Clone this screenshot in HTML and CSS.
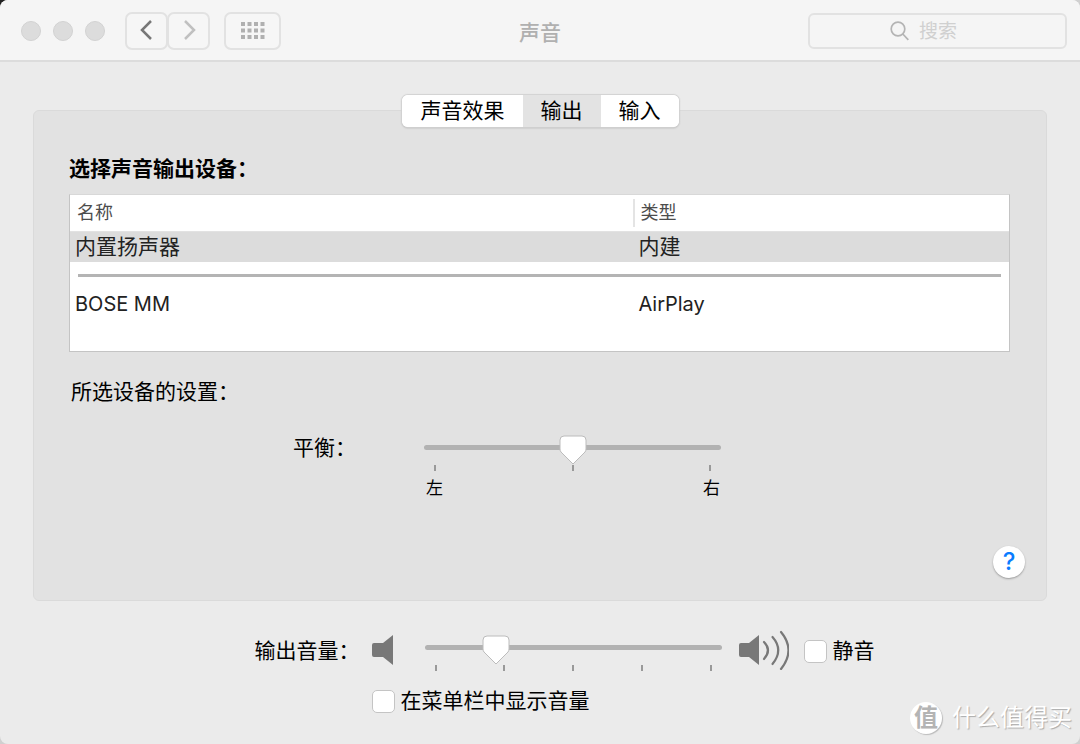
FILE: index.html
```html
<!DOCTYPE html>
<html lang="zh-CN">
<head>
<meta charset="utf-8">
<meta name="viewport" content="width=device-width, initial-scale=1">
<title>声音</title>
<link rel="stylesheet" href="styles.css">
</head>
<body>
<div class="window">
  <header class="toolbar">
    <div class="toolbar-left">
      <div class="lights"><span class="light"></span><span class="light"></span><span class="light"></span></div>
      <div class="nav">
        <button class="tool-button" type="button" aria-label="后退">
          <svg width="18" height="22" viewBox="0 0 18 22"><path d="M13 2 4 11 13 20" fill="none" stroke="#777" stroke-width="2.500"/></svg>
        </button>
        <button class="tool-button" type="button" aria-label="前进" disabled>
          <svg width="18" height="22" viewBox="0 0 18 22"><path d="M5 2 14 11 5 20" fill="none" stroke="#c0c0c0" stroke-width="2.500"/></svg>
        </button>
      </div>
      <button class="tool-button tool-button-wide" type="button" aria-label="显示全部">
        <svg width="24" height="18" viewBox="0 0 24 18" fill="#b0b0b0">
          <path d="M0 1h4v4H0zM6.500 1h4v4h-4zM13 1h4v4h-4zM19.500 1h4v4h-4zM0 7.500h4v4H0zM6.500 7.500h4v4h-4zM13 7.500h4v4h-4zM19.500 7.500h4v4h-4zM0 14h4v4H0zM6.500 14h4v4h-4zM13 14h4v4h-4zM19.500 14h4v4h-4z"/>
        </svg>
      </button>
    </div>
    <h1 class="title">声音</h1>
    <label class="search">
      <svg width="20" height="20" viewBox="0 0 20 20" fill="none" stroke="#b4b4b4" stroke-width="1.700"><circle cx="8" cy="8" r="6.800"/><path d="m12.800 13 5.500 5.800"/></svg>
      <input class="search-input" type="text" placeholder="搜索" aria-label="搜索">
    </label>
  </header>

  <main class="content">
    <div class="tabs" role="tablist">
      <button class="tab" type="button" role="tab">声音效果</button>
      <button class="tab tab-active" type="button" role="tab" aria-selected="true">输出</button>
      <button class="tab" type="button" role="tab">输入</button>
    </div>

    <section class="panel">
      <h2 class="heading">选择声音输出设备：</h2>
      <div class="device-list">
        <table class="devices">
          <thead>
            <tr><th class="col-name">名称</th><th class="col-type"><span class="type-label">类型</span></th></tr>
          </thead>
          <tbody>
            <tr class="selected"><td>内置扬声器</td><td>内建</td></tr>
            <tr><td class="divider" colspan="2"><hr class="rule"></td></tr>
            <tr class="latin"><td>BOSE MM</td><td>AirPlay</td></tr>
          </tbody>
        </table>
      </div>
      <p class="subheading">所选设备的设置：</p>
      <div class="controls balance">
        <label class="control-label" for="balance">平衡：</label>
        <div class="slider">
          <input class="range" id="balance" type="range" min="0" max="100" value="50">
          <div class="ticks"><i class="tick"></i><i class="tick"></i><i class="tick"></i></div>
          <div class="ends"><span>左</span><span>右</span></div>
        </div>
      </div>
      <div class="help-row"><button class="help" type="button" aria-label="帮助">?</button></div>
    </section>

    <div class="controls volume">
      <label class="control-label" for="volume">输出音量：</label>
      <svg class="speaker" width="22" height="32" viewBox="0 0 22 32"><path d="M2 9h9L21 1v30l-10-8H2q-2 0-2-2V11q0-2 2-2z" fill="#787878"/></svg>
      <div class="slider">
        <input class="range" id="volume" type="range" min="0" max="1000" value="215">
        <div class="ticks"><i class="tick"></i><i class="tick"></i><i class="tick"></i><i class="tick"></i><i class="tick"></i></div>
      </div>
      <svg class="speaker-loud" width="52" height="40" viewBox="0 0 52 40"><path d="M4 13h8l10-8v30l-10-8H4q-2 0-2-2V15q0-2 2-2z" fill="#787878"/><g fill="none" stroke="#787878" stroke-width="2.200" stroke-linecap="round"><path d="M27 12q8 8 0 17"/><path d="M35.500 7q11.500 13 0 27"/><path d="M44 2q15 18 0 37"/></g></svg>
      <label class="check"><input class="box" type="checkbox">静音</label>
      <label class="check check-menu"><input class="box" type="checkbox">在菜单栏中显示音量</label>
    </div>
  </main>

  <div class="watermark"><span class="mark">值</span><span>什么值得买</span></div>
</div>
</body>
</html>
```

FILE: styles.css
```css
* { box-sizing: border-box; }

html {
  background: radial-gradient(circle at 0 0, #222 0, #222 10px, #d0d0d0 11px);
}

body {
  margin: 0;
  color: #000;
  font: 21px/30px Roboto, "Noto Sans CJK SC", sans-serif;
}

button, input { font: inherit; color: inherit; }

.window {
  position: relative;
  min-height: 100vh;
  overflow: hidden;
  background: #ebebeb;
  border-radius: 8px;
}

.toolbar {
  display: grid;
  grid-template-columns: 1fr auto 1fr;
  align-items: center;
  height: 62px;
  padding: 2px 13px 0;
  background: #f5f5f5;
  border-bottom: 2px solid #dcdcdc;
}

.toolbar-left { display: flex; align-items: center; }
.lights { display: flex; gap: 12px; margin: 0 20px 0 8px; }
.light {
  width: 20px;
  height: 20px;
  background: #dcdcdc;
  border: 1px solid #d2d2d2;
  border-radius: 50%;
}
.nav { display: flex; margin-right: 14px; }

.tool-button {
  display: flex;
  align-items: center;
  justify-content: center;
  width: 43px;
  height: 38px;
  padding: 0 0 2px;
  background: #f6f6f6;
  border: 2px solid #e2e2e2;
  border-radius: 7px;
}
.tool-button + .tool-button { margin-left: -1px; }
.tool-button-wide { width: 57px; }

.title {
  margin: 4px 0 0;
  color: #b0b0b0;
  font-size: 21px;
  font-weight: 500;
}

.search {
  display: flex;
  align-items: center;
  justify-self: end;
  gap: 9px;
  width: 259px;
  height: 36px;
  padding-left: 80px;
  border: 2px solid #e2e2e2;
  border-radius: 6px;
}
.search-input {
  width: 100px;
  padding: 2px 0 0;
  background: none;
  border: 0;
  outline: 0;
  font-size: 19px;
}
.search-input::placeholder { color: #d0d0d0; opacity: 1; }

.content { padding: 33px 33px 0; }

.tabs {
  position: relative;
  display: flex;
  width: fit-content;
  margin: 0 auto -17px;
  overflow: hidden;
  background: #fff;
  border-radius: 6px;
  box-shadow: 0 0 1px 1px #d2d2d2, 0 1px 2px 0 #aaa;
}
.tab {
  height: 32px;
  padding: 0 18px;
  background: #fff;
  border: 0;
  line-height: 30px;
}
.tab:first-child { padding-left: 19px; }
.tab-active { background: #e3e3e3; }

.panel {
  padding: 43px 36px 22px 35px;
  background: #e2e2e2;
  border: 1px solid #dadada;
  border-radius: 6px;
}

.heading {
  margin: 0 0 10px;
  font-size: 21px;
  font-weight: 600;
}

.device-list {
  height: 158px;
  background: #fff;
  border: 1px solid #c4c4c4;
  border-top-color: #d8d8d8;
}
.devices {
  width: 100%;
  border-collapse: collapse;
  table-layout: fixed;
  text-align: left;
  color: #222;
}
.devices th {
  height: 36px;
  padding: 0 0 0 7px;
  color: #4c4c4c;
  font-size: 18px;
  font-weight: 400;
  border-bottom: 1px solid #e2e2e2;
}
.devices .col-name { width: 60%; }
.devices .col-type { padding: 0; }
.type-label {
  display: block;
  padding-left: 5px;
  border-left: 2px solid #e4e4e4;
  line-height: 28px;
}
.devices td { height: 31px; padding: 0 0 0 5px; }
.devices .selected { background: #dcdcdc; }
.devices .divider { height: 26px; padding: 0 8px; }
.latin { font-family: Inter, sans-serif; font-size: 20px; }
.rule { height: 3px; margin: 0; background: #b4b4b4; border: 0; }

.subheading { margin: 25px 0 29px 2px; }

.controls {
  display: grid;
  grid-template-columns: 102px 38px 297px 52px 72px;
  justify-content: center;
  column-gap: 15px;
  padding-left: 50px;
}
.control-label { justify-self: end; white-space: nowrap; }

.slider { grid-column: 3; }
.balance .control-label { margin-top: -3px; }
.balance { margin-bottom: 41px; }

.range {
  display: block;
  width: 100%;
  height: 30px;
  margin: 0;
  appearance: none;
  background: none;
}
.range::-webkit-slider-runnable-track {
  height: 5px;
  margin-bottom: 7px;
  background: #b2b2b2;
  border-radius: 3px;
}
.range::-webkit-slider-thumb {
  width: 28px;
  height: 30px;
  margin-top: -10px;
  appearance: none;
  background: url("data:image/svg+xml,%3Csvg xmlns='http://www.w3.org/2000/svg' width='28' height='30'%3E%3Cpath d='M5 1h18q4 0 4 4v9q0 2-1 3L14 29 2 17q-1-1-1-3V5q0-4 4-4z' fill='white' stroke='%23bcbcbc'/%3E%3C/svg%3E") no-repeat;
  border: 0;
}
.ticks {
  display: flex;
  justify-content: space-between;
  margin-top: -1px;
  padding: 0 10px;
}
.tick { width: 2px; height: 6px; background: #999; }
.ends {
  display: flex;
  justify-content: space-between;
  padding: 0 1px 0 2px;
  font-size: 17px;
  line-height: 34px;
}

.help-row { display: flex; justify-content: flex-end; margin-right: -15px; }
.help {
  width: 32px;
  height: 32px;
  padding: 0;
  background: #fff;
  border: 0;
  border-radius: 50%;
  box-shadow: 0 1px 2px 0 #999;
  color: #0a7cff;
  font-family: Inter, sans-serif;
  font-size: 24px;
  font-weight: 500;
  line-height: 32px;
}

.volume { padding-top: 35px; row-gap: 15px; }
.volume .control-label { margin-right: -3px; }
.speaker { margin-top: -2px; }
.speaker-loud { margin-top: -6px; }
.volume > svg { margin-bottom: -4px; }
.check { display: flex; align-items: center; gap: 6px; white-space: nowrap; }
.volume > .check { align-self: start; }
.check-menu { grid-column: 2 / -1; }
.box {
  flex: none;
  width: 23px;
  height: 23px;
  margin: 0;
  appearance: none;
  background: #fff;
  border: 1px solid #c4c4c4;
  border-radius: 5px;
}

.watermark {
  position: absolute;
  right: 8px;
  bottom: 10px;
  display: flex;
  align-items: center;
  gap: 10px;
  color: #fff;
  font-size: 24px;
  line-height: 32px;
  text-shadow: 1px 1px 1px #aaa;
}
.mark {
  width: 32px;
  height: 32px;
  background: #fff;
  border-radius: 50%;
  box-shadow: 1px 1px 1px #bbb;
  color: #b4b4b4;
  font-weight: 700;
  line-height: 32px;
  text-align: center;
  text-shadow: none;
}
```
